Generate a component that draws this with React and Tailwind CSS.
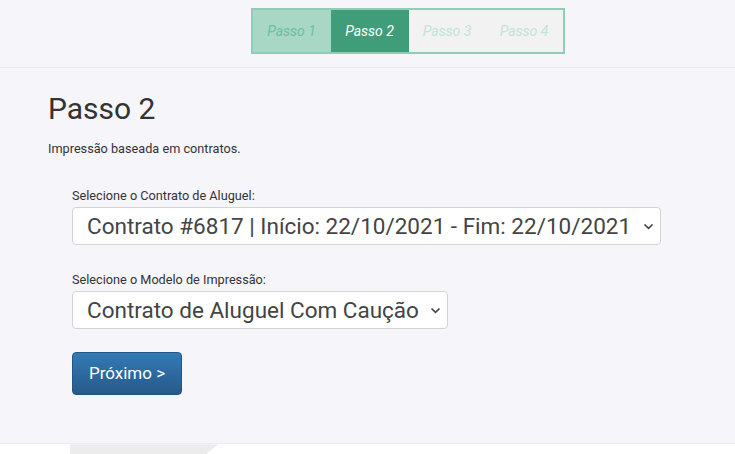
import { useState } from "react";

const steps = ["Passo 1", "Passo 2", "Passo 3", "Passo 4"];

const Chevron = () => (
  <svg width="11" height="7" viewBox="0 0 11 7" className="shrink-0">
    <path d="M1.5 1.5 L5.5 5.3 L9.5 1.5" fill="none" stroke="#444" strokeWidth="1.7" />
  </svg>
);

const FakeSelect = ({ value, width }) => (
  <div
    className={`flex items-center justify-between h-[38px] ${width} bg-white border border-[#d4d4d4] rounded-[4px] pl-[14px] pr-[6px] text-[22.5px] text-[#444] leading-none`}
  >
    <span className="whitespace-nowrap">{value}</span>
    <Chevron />
  </div>
);

const App = () => {
  const [step] = useState(1);

  return (
    <div className="min-h-[454px] bg-white font-['Roboto',sans-serif] text-[#333]">
      <div className="bg-[#f6f5fa]">
        <div className="h-[68px] border-b border-[#e9e9ec] flex justify-center pt-[8px] pl-[80px]">
          <div className="flex h-[46px] border-2 border-[#8fcdb5] bg-[#f2f2f2]">
            {steps.map((s, i) => (
              <div
                key={s}
                className={
                  i < step
                    ? "w-[78px] flex items-center justify-center italic text-[14px] bg-[#a8d8c5] text-[#6fbd9d]"
                    : i === step
                    ? "w-[78px] flex items-center justify-center italic text-[14px] bg-[#3f9e79] text-white"
                    : "w-[77px] flex items-center justify-center italic text-[14px] text-[#bfe5d6]"
                }
              >
                {s}
              </div>
            ))}
          </div>
        </div>

        <div className="px-[48px] pt-[23px] pb-[48px] border-b border-[#ebebf0]">
          <h2 className="text-[30px] leading-[36px] font-normal text-[#333]">Passo 2</h2>
          <p className="text-[12.7px] mt-[12px] text-[#333]">Impressão baseada em contratos.</p>

          <div className="pl-[24px] mt-[28px]">
            <label className="block text-[12.7px] text-[#333] mb-[2px]">
              Selecione o Contrato de Aluguel:
            </label>
            <FakeSelect
              value="Contrato #6817 | Início: 22/10/2021 - Fim: 22/10/2021"
              width="w-[589px]"
            />

            <label className="block text-[12.7px] text-[#333] mt-[25px] mb-[2px]">
              Selecione o Modelo de Impressão:
            </label>
            <FakeSelect value="Contrato de Aluguel Com Caução" width="w-[376px]" />

            <button className="mt-[23px] w-[110px] h-[43px] rounded-[4px] border border-[#245580] bg-gradient-to-b from-[#337ab7] to-[#265a88] text-white text-[17px]">
              Próximo &gt;
            </button>
          </div>
        </div>
      </div>

      <div className="h-[10px] ml-[70px] w-[148px] bg-[#ececec] [clip-path:polygon(0_0,100%_0,92%_100%,0_100%)]" />
    </div>
  );
};

export default App;
